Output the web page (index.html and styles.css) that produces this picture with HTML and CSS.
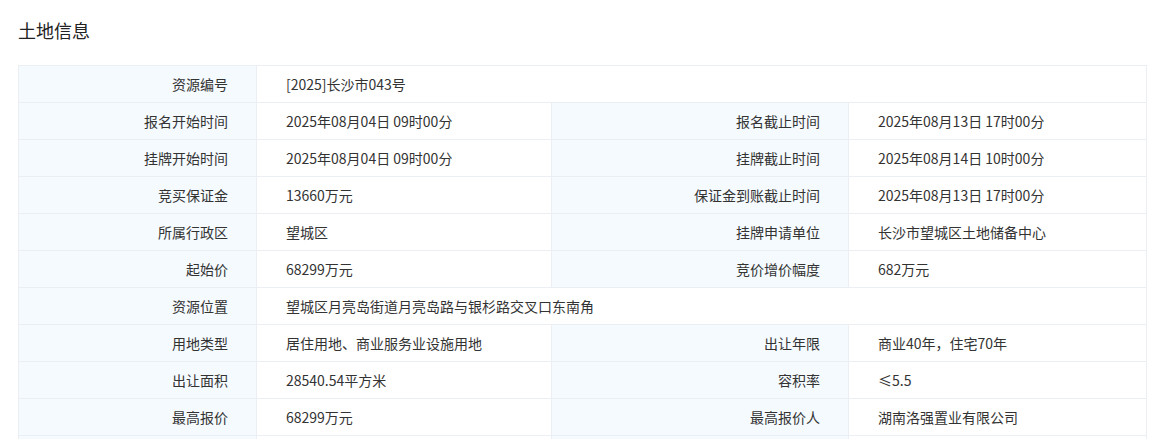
FILE: index.html
```html
<!DOCTYPE html>
<html lang="zh-CN">
<head>
  <meta charset="UTF-8" />
  <meta name="viewport" content="width=device-width, initial-scale=1" />
  <title>土地信息</title>
  <link rel="stylesheet" href="styles.css">
</head>
<body>

  <h3 class="section-title">土地信息</h3>

  <table class="info-table">
    <colgroup>
      <col class="col-label">
      <col class="col-value">
      <col class="col-label2">
      <col class="col-value2">
    </colgroup>
    <tbody>
      <tr>
        <th>资源编号</th>
        <td colspan="3">[2025]长沙市043号</td>
      </tr>
      <tr>
        <th>报名开始时间</th>
        <td>2025年08月04日 09时00分</td>
        <th>报名截止时间</th>
        <td>2025年08月13日 17时00分</td>
      </tr>
      <tr>
        <th>挂牌开始时间</th>
        <td>2025年08月04日 09时00分</td>
        <th>挂牌截止时间</th>
        <td>2025年08月14日 10时00分</td>
      </tr>
      <tr>
        <th>竞买保证金</th>
        <td>13660万元</td>
        <th>保证金到账截止时间</th>
        <td>2025年08月13日 17时00分</td>
      </tr>
      <tr>
        <th>所属行政区</th>
        <td>望城区</td>
        <th>挂牌申请单位</th>
        <td>长沙市望城区土地储备中心</td>
      </tr>
      <tr>
        <th>起始价</th>
        <td>68299万元</td>
        <th>竞价增价幅度</th>
        <td>682万元</td>
      </tr>
      <tr>
        <th>资源位置</th>
        <td colspan="3">望城区月亮岛街道月亮岛路与银杉路交叉口东南角</td>
      </tr>
      <tr>
        <th>用地类型</th>
        <td>居住用地、商业服务业设施用地</td>
        <th>出让年限</th>
        <td>商业40年，住宅70年</td>
      </tr>
      <tr>
        <th>出让面积</th>
        <td>28540.54平方米</td>
        <th>容积率</th>
        <td>≤5.5</td>
      </tr>
      <tr>
        <th>最高报价</th>
        <td>68299万元</td>
        <th>最高报价人</th>
        <td>湖南洛强置业有限公司</td>
      </tr>
      <tr>
        <th></th>
        <td></td>
        <th></th>
        <td></td>
      </tr>
    </tbody>
  </table>

</body>
</html>
```

FILE: styles.css
```css
* {
  box-sizing: border-box;
  margin: 0;
  padding: 0;
}

body {
  font-family: "Microsoft YaHei", "Noto Sans CJK SC", "Noto Sans", sans-serif;
  background: #fff;
  color: #333;
  padding: 18px 7px 0 18px;
}

.section-title {
  font-size: 18px;
  font-weight: normal;
  line-height: 24px;
  color: #222;
  margin-bottom: 23px;
}

.info-table {
  width: 1128px;
  border-collapse: collapse;
  table-layout: fixed;
  font-size: 14px;
}

.col-label {
  width: 238px;
}

.col-value {
  width: 295px;
}

.col-label2 {
  width: 297px;
}

.col-value2 {
  width: 298px;
}

.info-table tr {
  height: 37px;
}

.info-table th,
.info-table td {
  border: 1px solid #ebeff3;
  font-weight: normal;
  line-height: 20px;
  white-space: nowrap;
}

.info-table th {
  background: #f5fafe;
  text-align: right;
  padding: 0 28px 0 10px;
  color: #333;
}

.info-table td {
  text-align: left;
  padding: 0 10px 0 29px;
  color: #333;
}
```
